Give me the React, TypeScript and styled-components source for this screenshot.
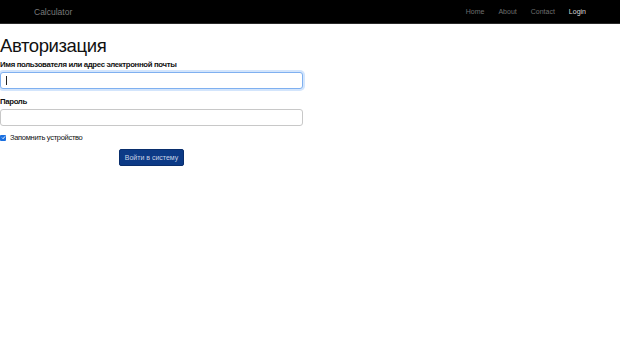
import { FC } from 'react';
import styled, { createGlobalStyle } from 'styled-components';

const GlobalStyle = createGlobalStyle`
  html, body {
    margin: 0;
    padding: 0;
    background: #fff;
    font-family: 'Liberation Sans', Arial, sans-serif;
    color: #111;
  }
`;

const NavBar = styled.header`
  height: 24px;
  background: #000;
  border-bottom: 1px solid #2a2a2a;
  display: flex;
  align-items: center;
  padding: 0 34px;
  box-sizing: border-box;
`;

const Brand = styled.span`
  flex: 1;
  font-size: 8.5px;
  color: #7a7a7a;
`;

const NavLinks = styled.nav`
  display: flex;
  gap: 14px;
`;

const NavLink = styled.span<{ $active?: boolean }>`
  font-size: 7px;
  color: ${(p) => (p.$active ? '#d8d8d8' : '#6f6f6f')};
  cursor: pointer;
`;

const Form = styled.form`
  width: 303px;
  display: flex;
  flex-direction: column;
`;

const Title = styled.h1`
  margin: 10px 0 2px;
  font-size: 18.5px;
  font-weight: normal;
  line-height: 24px;
  letter-spacing: -0.4px;
`;

const Label = styled.label`
  font-size: 7.8px;
  font-weight: bold;
  line-height: 10px;
  margin-bottom: 2px;
  letter-spacing: -0.35px;
`;

const Input = styled.input<{ $focused?: boolean }>`
  height: 17px;
  box-sizing: border-box;
  border: 1px solid ${(p) => (p.$focused ? '#7fb0f0' : '#c8c8c8')};
  border-radius: 3px;
  box-shadow: ${(p) => (p.$focused ? '0 0 0 2px rgba(130,180,245,0.35)' : 'none')};
  margin-bottom: 8px;
  outline: none;
  padding: 0 5px;
  font-size: 8px;
`;

const Caret = styled.span`
  position: absolute;
  left: 6px;
  top: 4px;
  width: 1px;
  height: 9px;
  background: #222;
`;

const Field = styled.div`
  position: relative;
  display: flex;
  flex-direction: column;
`;

const CheckRow = styled.div`
  display: flex;
  align-items: center;
  gap: 4px;
  font-size: 7.5px;
  letter-spacing: -0.3px;
  margin-top: -1px;
`;

const Check = styled.span`
  width: 6px;
  height: 6px;
  border-radius: 1px;
  background: #1a6fe0;
  display: flex;
  align-items: center;
  justify-content: center;
`;

const Submit = styled.button`
  align-self: center;
  margin-top: 7px;
  width: 65px;
  height: 17px;
  background: #0c3a86;
  border: 1px solid #092e6d;
  border-radius: 2px;
  color: #c9d3e6;
  font-family: 'Liberation Sans', Arial, sans-serif;
  font-size: 7px;
  padding: 0;
`;

const App: FC = () => {
  return (
    <>
      <GlobalStyle />
      <NavBar>
        <Brand>Calculator</Brand>
        <NavLinks>
          <NavLink>Home</NavLink>
          <NavLink>About</NavLink>
          <NavLink>Contact</NavLink>
          <NavLink $active>Login</NavLink>
        </NavLinks>
      </NavBar>
      <Form onSubmit={(e) => e.preventDefault()}>
        <Title>Авторизация</Title>
        <Label>Имя пользователя или адрес электронной почты</Label>
        <Field>
          <Input $focused readOnly />
          <Caret />
        </Field>
        <Label>Пароль</Label>
        <Input type="password" readOnly />
        <CheckRow>
          <Check>
            <svg width="5" height="5" viewBox="0 0 10 10">
              <path d="M2 5.2 L4.2 7.4 L8 2.8" stroke="#fff" strokeWidth="1.8" fill="none" />
            </svg>
          </Check>
          Запомнить устройство
        </CheckRow>
        <Submit type="submit">Войти в систему</Submit>
      </Form>
    </>
  );
};

export default App;
